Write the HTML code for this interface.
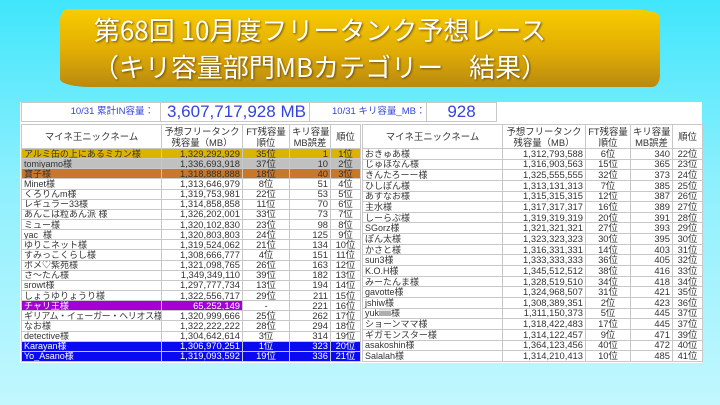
<!DOCTYPE html>
<html><head><meta charset="utf-8"><style>
*{margin:0;padding:0;box-sizing:border-box}
body{width:720px;height:405px;overflow:hidden;background:linear-gradient(#40e6fc 0%,#8ef0fd 45%,#c2f7fe 100%);font-family:"Liberation Sans","Noto Sans CJK JP",sans-serif;position:relative}
.banner{position:absolute;left:60px;top:9px;width:600px;height:78px;background:linear-gradient(#f8cc00,#e0ac04 55%,#b98a10);border-radius:8px 30px 8px 30px/12px 8px 12px 8px;color:#fff;text-align:center;font-size:26px;line-height:37px;padding-top:2px;padding-right:80px;text-shadow:1px 1px 2px #6a4b00;font-family:"Noto Sans CJK JP",sans-serif;font-weight:400}
.panel{position:absolute;left:20px;top:102px;width:682px;height:261px;background:#fff}
table{position:absolute;border-collapse:collapse;font-size:9.4px;color:#333;table-layout:fixed}
td{border:1px solid #c8c8c8;height:1px;line-height:8px;padding:0 2px;white-space:nowrap;overflow:hidden}
td:first-child{font-size:9px}
td.r{text-align:right}td.c{text-align:center}
tr.h td{height:24px;text-align:center;line-height:11px;font-size:9.4px}
.g td{background:#dcb300}.s td{background:#c0c0c0}.b td{background:#c8782a}
.p td.pp{background:#a300d6;color:#fff}.bl td{background:#0a0af0;color:#fff}
.top{position:absolute;top:102px;height:20px;border:1px solid #c8c8c8;color:#3344dd;font-size:9.5px;line-height:18px;background:#fff}
</style></head><body>
<div class="banner">第68回 10月度フリータンク予想レース<br>（キリ容量部門MBカテゴリー　結果）</div>
<div class="panel"></div>
<div class="top" style="left:21px;width:140px;text-align:right;padding-right:6px">10/31 累計IN容量：</div>
<div class="top" style="left:160px;width:150px;font-size:17px;padding-left:6px">3,607,717,928 MB</div>
<div class="top" style="left:309px;width:118px;padding-left:22px">10/31 キリ容量_MB：</div>
<div class="top" style="left:426px;width:71px;font-size:17px;text-align:center">928</div>
<table style="left:21px;top:124px;width:339px">
<colgroup><col style="width:140px"><col style="width:81px"><col style="width:47px"><col style="width:41px"><col style="width:30px"></colgroup>
<tr class="h"><td>マイネ王ニックネーム</td><td>予想フリータンク<br>残容量（MB）</td><td>FT残容量<br>順位</td><td>キリ容量<br>MB誤差</td><td>順位</td></tr>
</table>
<table style="left:21px;top:148px;width:339px;height:214px">
<colgroup><col style="width:140px"><col style="width:81px"><col style="width:47px"><col style="width:41px"><col style="width:30px"></colgroup>
<tr class="g"><td>アルミ缶の上にあるミカン様</td><td class="r">1,329,292,929</td><td class="c">35位</td><td class="r">1</td><td class="c">1位</td></tr>
<tr class="s"><td>tomiyamo様</td><td class="r">1,336,693,918</td><td class="c">37位</td><td class="r">10</td><td class="c">2位</td></tr>
<tr class="b"><td>寶子様</td><td class="r">1,318,888,888</td><td class="c">18位</td><td class="r">40</td><td class="c">3位</td></tr>
<tr><td>Minet様</td><td class="r">1,313,646,979</td><td class="c">8位</td><td class="r">51</td><td class="c">4位</td></tr>
<tr><td>くろりんm様</td><td class="r">1,319,753,981</td><td class="c">22位</td><td class="r">53</td><td class="c">5位</td></tr>
<tr><td>レギュラー33様</td><td class="r">1,314,858,858</td><td class="c">11位</td><td class="r">70</td><td class="c">6位</td></tr>
<tr><td>あんこは粒あん派 様</td><td class="r">1,326,202,001</td><td class="c">33位</td><td class="r">73</td><td class="c">7位</td></tr>
<tr><td>ミュー様</td><td class="r">1,320,102,830</td><td class="c">23位</td><td class="r">98</td><td class="c">8位</td></tr>
<tr><td>yac_様</td><td class="r">1,320,803,803</td><td class="c">24位</td><td class="r">125</td><td class="c">9位</td></tr>
<tr><td>ゆりこネット様</td><td class="r">1,319,524,062</td><td class="c">21位</td><td class="r">134</td><td class="c">10位</td></tr>
<tr><td>すみっこくらし様</td><td class="r">1,308,666,777</td><td class="c">4位</td><td class="r">151</td><td class="c">11位</td></tr>
<tr><td>ポメ♡紫苑様</td><td class="r">1,321,098,765</td><td class="c">26位</td><td class="r">163</td><td class="c">12位</td></tr>
<tr><td>さ～たん様</td><td class="r">1,349,349,110</td><td class="c">39位</td><td class="r">182</td><td class="c">13位</td></tr>
<tr><td>srowt様</td><td class="r">1,297,777,734</td><td class="c">13位</td><td class="r">194</td><td class="c">14位</td></tr>
<tr><td>しょうゆりょうり様</td><td class="r">1,322,556,717</td><td class="c">29位</td><td class="r">211</td><td class="c">15位</td></tr>
<tr class="p"><td class="pp">チャリ王様</td><td class="r pp">65,252,149</td><td class="c">-</td><td class="r">221</td><td class="c">16位</td></tr>
<tr><td style="letter-spacing:-0.3px">ギリアム・イェーガー・ヘリオス様</td><td class="r">1,320,999,666</td><td class="c">25位</td><td class="r">262</td><td class="c">17位</td></tr>
<tr><td>なお様</td><td class="r">1,322,222,222</td><td class="c">28位</td><td class="r">294</td><td class="c">18位</td></tr>
<tr><td>detective様</td><td class="r">1,304,642,614</td><td class="c">3位</td><td class="r">314</td><td class="c">19位</td></tr>
<tr class="bl"><td>Karayan様</td><td class="r">1,306,970,251</td><td class="c">1位</td><td class="r">323</td><td class="c">20位</td></tr>
<tr class="bl"><td>Yo_Asano様</td><td class="r">1,319,093,592</td><td class="c">19位</td><td class="r">336</td><td class="c">21位</td></tr>
</table>
<table style="left:362px;top:124px;width:340px">
<colgroup><col style="width:140px"><col style="width:83px"><col style="width:45px"><col style="width:42px"><col style="width:30px"></colgroup>
<tr class="h"><td>マイネ王ニックネーム</td><td>予想フリータンク<br>残容量（MB）</td><td>FT残容量<br>順位</td><td>キリ容量<br>MB誤差</td><td>順位</td></tr>
</table>
<table style="left:362px;top:148px;width:340px;height:214px">
<colgroup><col style="width:140px"><col style="width:83px"><col style="width:45px"><col style="width:42px"><col style="width:30px"></colgroup>
<tr><td>おきゅあ様</td><td class="r">1,312,793,588</td><td class="c">6位</td><td class="r">340</td><td class="c">22位</td></tr>
<tr><td>じゅほなん様</td><td class="r">1,316,903,563</td><td class="c">15位</td><td class="r">365</td><td class="c">23位</td></tr>
<tr><td>きんたろーー様</td><td class="r">1,325,555,555</td><td class="c">32位</td><td class="r">373</td><td class="c">24位</td></tr>
<tr><td>ひしぽん様</td><td class="r">1,313,131,313</td><td class="c">7位</td><td class="r">385</td><td class="c">25位</td></tr>
<tr><td>あすなお様</td><td class="r">1,315,315,315</td><td class="c">12位</td><td class="r">387</td><td class="c">26位</td></tr>
<tr><td>主水様</td><td class="r">1,317,317,317</td><td class="c">16位</td><td class="r">389</td><td class="c">27位</td></tr>
<tr><td>しーらぷ様</td><td class="r">1,319,319,319</td><td class="c">20位</td><td class="r">391</td><td class="c">28位</td></tr>
<tr><td>SGorz様</td><td class="r">1,321,321,321</td><td class="c">27位</td><td class="r">393</td><td class="c">29位</td></tr>
<tr><td>ぽん太様</td><td class="r">1,323,323,323</td><td class="c">30位</td><td class="r">395</td><td class="c">30位</td></tr>
<tr><td>かさと様</td><td class="r">1,316,331,331</td><td class="c">14位</td><td class="r">403</td><td class="c">31位</td></tr>
<tr><td>sun3様</td><td class="r">1,333,333,333</td><td class="c">36位</td><td class="r">405</td><td class="c">32位</td></tr>
<tr><td>K.O.H様</td><td class="r">1,345,512,512</td><td class="c">38位</td><td class="r">416</td><td class="c">33位</td></tr>
<tr><td>みーたんま様</td><td class="r">1,328,519,510</td><td class="c">34位</td><td class="r">418</td><td class="c">34位</td></tr>
<tr><td>gavotte様</td><td class="r">1,324,968,507</td><td class="c">31位</td><td class="r">421</td><td class="c">35位</td></tr>
<tr><td>jshiw様</td><td class="r">1,308,389,351</td><td class="c">2位</td><td class="r">423</td><td class="c">36位</td></tr>
<tr><td>yukiiiiii様</td><td class="r">1,311,150,373</td><td class="c">5位</td><td class="r">445</td><td class="c">37位</td></tr>
<tr><td>ショーンママ様</td><td class="r">1,318,422,483</td><td class="c">17位</td><td class="r">445</td><td class="c">37位</td></tr>
<tr><td>ギガモンスター様</td><td class="r">1,314,122,457</td><td class="c">9位</td><td class="r">471</td><td class="c">39位</td></tr>
<tr><td>asakoshin様</td><td class="r">1,364,123,456</td><td class="c">40位</td><td class="r">472</td><td class="c">40位</td></tr>
<tr><td>Salalah様</td><td class="r">1,314,210,413</td><td class="c">10位</td><td class="r">485</td><td class="c">41位</td></tr>
</table>
</body></html>
